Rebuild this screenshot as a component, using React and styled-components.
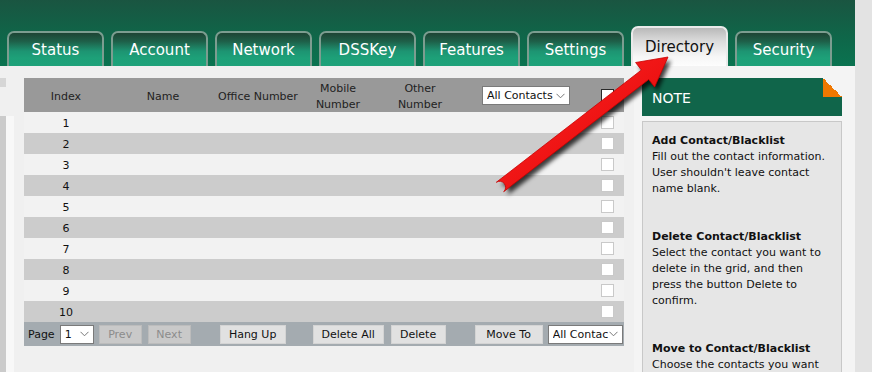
import React from "react";
import styled, { createGlobalStyle } from "styled-components";

const Global = createGlobalStyle`
  html, body { margin: 0; padding: 0; }
  body { background: #f0f0f0; font-family: "DejaVu Sans", Verdana, sans-serif; }
`;

const Page = styled.div`
  position: relative;
  display: flex;
  width: 872px;
  height: 372px;
  overflow: hidden;
  background: #f0f0f0;
`;

const Main = styled.div`
  width: 855px;
  display: flex;
  flex-direction: column;
`;

const Gutter = styled.div`
  width: 17px;
  background: #e3e3e3;
`;

const Header = styled.div`
  height: 66px;
  flex: none;
  display: flex;
  align-items: flex-end;
  padding-left: 7px;
  box-sizing: border-box;
  background: linear-gradient(180deg, #1a5541 0%, #0f6649 55%, #0a7350 100%);
`;

const Tabs = styled.div`
  display: flex;
  align-items: flex-end;
  gap: 7px;
`;

const Tab = styled.div`
  width: 97px;
  height: ${(p) => (p.$active ? 40 : 35)}px;
  box-sizing: border-box;
  border: 2px solid ${(p) => (p.$active ? "#eaeaea" : "#7c9d90")};
  border-bottom: none;
  border-radius: 7px 7px 0 0;
  display: flex;
  align-items: center;
  justify-content: center;
  padding-top: ${(p) => (p.$active ? 0 : 1)}px;
  font-size: 15px;
  color: ${(p) => (p.$active ? "#111" : "#fff")};
  background: ${(p) =>
    p.$active
      ? "linear-gradient(180deg, #b9b9b9 0%, #dcdcdc 35%, #f6f6f6 75%, #fdfdfd 100%)"
      : "linear-gradient(180deg, #1d4434 0%, #1e5f48 25%, #1d9472 55%, #1da078 75%, #1ea27a 100%)"};
`;

const Content = styled.div`
  flex: 1;
  display: flex;
`;

const Sidebar = styled.div`
  width: 14px;
  display: flex;
  flex-direction: column;
`;

const SideTab = styled.div`
  margin-top: 12px;
  width: 6px;
  height: 9px;
  background: #d6d6d6;
`;

const SideList = styled.div`
  margin-top: 29px;
  flex: 1;
  background: linear-gradient(90deg, #cbcbcb 0, #cbcbcb 6px, #f8f8f8 6px, #f8f8f8 14px);
`;

const TableWrap = styled.div`
  margin: 12px 0 0 10px;
  width: 600px;
  display: flex;
  flex-direction: column;
  font-size: 11px;
  color: #1a1a1a;
`;

const cols = "84px 110px 80px 80px 84px 128px 34px";

const HeadRow = styled.div`
  display: grid;
  grid-template-columns: ${cols};
  height: 34px;
  background: #999999;
  align-items: center;
  justify-items: center;
  text-align: center;
  line-height: 16px;
  color: #222;
`;

const HeadCell = styled.div`
  padding-top: ${(p) => p.$pt || 0}px;
`;

const Row = styled.div`
  display: grid;
  grid-template-columns: ${cols};
  height: 21px;
  align-items: center;
  justify-items: center;
  background: ${(p) => (p.$alt ? "#cccccc" : "#f2f2f2")};
  font-size: 11px;
  color: #111;
`;

const RowNum = styled.span`
  padding-top: 1px;
`;

const Check = styled.div`
  width: 13px;
  height: 13px;
  box-sizing: border-box;
  background: #fff;
  border: 1px solid ${(p) => (p.$dark ? "#2a2a2a" : "#c9c9c9")};
`;

const Select = styled.div`
  width: ${(p) => p.$w}px;
  height: 19px;
  box-sizing: border-box;
  background: #fff;
  border: 1px solid #7a7a7a;
  display: flex;
  align-items: center;
  padding: 0 4px 0 4px;
  font-size: 11px;
  color: #111;
  overflow: hidden;
  white-space: nowrap;
  margin-left: ${(p) => p.$ml || 0}px;
`;

const SelText = styled.span`
  flex: 1;
  overflow: hidden;
  text-align: left;
`;

const Chevron = () => (
  <svg width="9" height="6" viewBox="0 0 9 6" style={{ flex: "none" }}>
    <path d="M0.5 0.8 L4.5 4.8 L8.5 0.8" fill="none" stroke="#777" strokeWidth="1" />
  </svg>
);

const Footer = styled.div`
  height: 24px;
  background: #a4abb0;
  display: flex;
  align-items: center;
  padding-left: 4px;
  font-size: 11px;
  color: #111;
`;

const PageLabel = styled.span`
  margin-right: 5px;
`;

const Btn = styled.div`
  height: 19px;
  box-sizing: border-box;
  width: ${(p) => p.$w}px;
  margin-left: ${(p) => p.$ml || 0}px;
  display: flex;
  align-items: center;
  justify-content: center;
  font-size: 11px;
  background: ${(p) => (p.$disabled ? "#c9c9c9" : "#e1e1e1")};
  border: 1px solid ${(p) => (p.$disabled ? "#bcbcbc" : "#d4d4d4")};
  color: ${(p) => (p.$disabled ? "#8c8c8c" : "#111")};
`;

const NoteCol = styled.div`
  margin-left: 10px;
  flex: 1;
  background: #f4f4f4;
  padding: 12px 13px 0 8px;
  display: flex;
  flex-direction: column;
`;

const NoteHead = styled.div`
  position: relative;
  height: 38px;
  background: #10654a;
  color: #fff;
  font-size: 14px;
  display: flex;
  align-items: center;
  padding-left: 10px;
  padding-top: 2px;
  box-sizing: border-box;
  &::after {
    content: "";
    position: absolute;
    top: 0;
    right: 0;
    width: 19px;
    height: 19px;
    background: linear-gradient(45deg, #f07800 0%, #f07800 50%, #f4f4f4 50%, #f4f4f4 100%);
  }
`;

const NoteBody = styled.div`
  margin-top: 5px;
  flex: 1;
  background: #e6e6e6;
  border: 1px solid #c8c8c8;
  border-bottom: none;
  padding: 11px 10px 0 9px;
  font-size: 11px;
  line-height: 16px;
  color: #111;
`;

const NoteTitle = styled.div`
  font-weight: bold;
`;

const NotePara = styled.div`
  margin-bottom: ${(p) => (p.$last ? 0 : 32)}px;
`;

const ArrowLayer = styled.svg`
  position: absolute;
  left: 0;
  top: 0;
  pointer-events: none;
`;

const tabs = ["Status", "Account", "Network", "DSSKey", "Features", "Settings", "Directory", "Security"];

function RedArrow() {
  const T = [500, 187];
  const P = [668, 57];
  const dx = P[0] - T[0];
  const dy = P[1] - T[1];
  const len = Math.hypot(dx, dy);
  const u = [dx / len, dy / len];
  const n = [-u[1], u[0]];
  const hl = 29;
  const hw = 15.5;
  const sw = 6;
  const B = [P[0] - hl * u[0], P[1] - hl * u[1]];
  const pt = (p) => `${p[0].toFixed(1)},${p[1].toFixed(1)}`;
  const a1 = [T[0] + sw * n[0], T[1] + sw * n[1]];
  const a2 = [B[0] + sw * n[0], B[1] + sw * n[1]];
  const b1 = [B[0] + hw * n[0], B[1] + hw * n[1]];
  const b2 = [B[0] - hw * n[0], B[1] - hw * n[1]];
  const a3 = [B[0] - sw * n[0], B[1] - sw * n[1]];
  const a4 = [T[0] - sw * n[0], T[1] - sw * n[1]];
  const d = `M${pt(a1)} L${pt(a2)} L${pt(b1)} L${pt(P)} L${pt(b2)} L${pt(a3)} L${pt(a4)} A${sw},${sw} 0 0 1 ${pt(a1)} Z`;
  return (
    <ArrowLayer width="872" height="372" viewBox="0 0 872 372">
      <defs>
        <filter id="sh" x="-20%" y="-20%" width="140%" height="140%">
          <feGaussianBlur stdDeviation="2.2" />
        </filter>
        <linearGradient id="rg" x1="0" y1="0" x2="1" y2="1">
          <stop offset="0" stopColor="#ff2a2a" />
          <stop offset="1" stopColor="#e00000" />
        </linearGradient>
      </defs>
      <path d={d} fill="rgba(0,0,0,0.75)" transform="translate(3,4)" filter="url(#sh)" />
      <path d={d} fill="url(#rg)" stroke="#c80000" strokeWidth="0.8" strokeLinejoin="round" />
    </ArrowLayer>
  );
}

export default function App() {
  const rows = Array.from({ length: 10 }, (_, i) => i + 1);
  return (
    <>
      <Global />
      <Page>
        <Main>
          <Header>
            <Tabs>
              {tabs.map((t) => (
                <Tab key={t} $active={t === "Directory"}>
                  {t}
                </Tab>
              ))}
            </Tabs>
          </Header>
          <Content>
            <Sidebar>
              <SideTab />
              <SideList />
            </Sidebar>
            <TableWrap>
              <HeadRow>
                <HeadCell $pt={3}>Index</HeadCell>
                <HeadCell $pt={3}>Name</HeadCell>
                <HeadCell $pt={3}>Office Number</HeadCell>
                <HeadCell $pt={3}>Mobile<br />Number</HeadCell>
                <HeadCell $pt={3}>Other<br />Number</HeadCell>
                <Select $w={88}>
                  <SelText>All Contacts</SelText>
                  <Chevron />
                </Select>
                <Check $dark />
              </HeadRow>
              {rows.map((r) => (
                <Row key={r} $alt={r % 2 === 0}>
                  <RowNum>{r}</RowNum>
                  <span />
                  <span />
                  <span />
                  <span />
                  <span />
                  <Check />
                </Row>
              ))}
              <Footer>
                <PageLabel>Page</PageLabel>
                <Select $w={34}>
                  <SelText>1</SelText>
                  <Chevron />
                </Select>
                <Btn $w={43} $ml={5} $disabled>Prev</Btn>
                <Btn $w={43} $ml={6} $disabled>Next</Btn>
                <Btn $w={66} $ml={29}>Hang Up</Btn>
                <Btn $w={71} $ml={27}>Delete All</Btn>
                <Btn $w={55} $ml={7}>Delete</Btn>
                <Btn $w={68} $ml={29}>Move To</Btn>
                <Select $w={75} $ml={5}>
                  <SelText>All Contac</SelText>
                  <Chevron />
                </Select>
              </Footer>
            </TableWrap>
            <NoteCol>
              <NoteHead>NOTE</NoteHead>
              <NoteBody>
                <NotePara>
                  <NoteTitle>Add Contact/Blacklist</NoteTitle>
                  Fill out the contact information. User shouldn't leave contact name blank.
                </NotePara>
                <NotePara>
                  <NoteTitle>Delete Contact/Blacklist</NoteTitle>
                  Select the contact you want to delete in the grid, and then press the button Delete to confirm.
                </NotePara>
                <NotePara $last>
                  <NoteTitle>Move to Contact/Blacklist</NoteTitle>
                  Choose the contacts you want
                </NotePara>
              </NoteBody>
            </NoteCol>
          </Content>
        </Main>
        <Gutter />
        <RedArrow />
      </Page>
    </>
  );
}
